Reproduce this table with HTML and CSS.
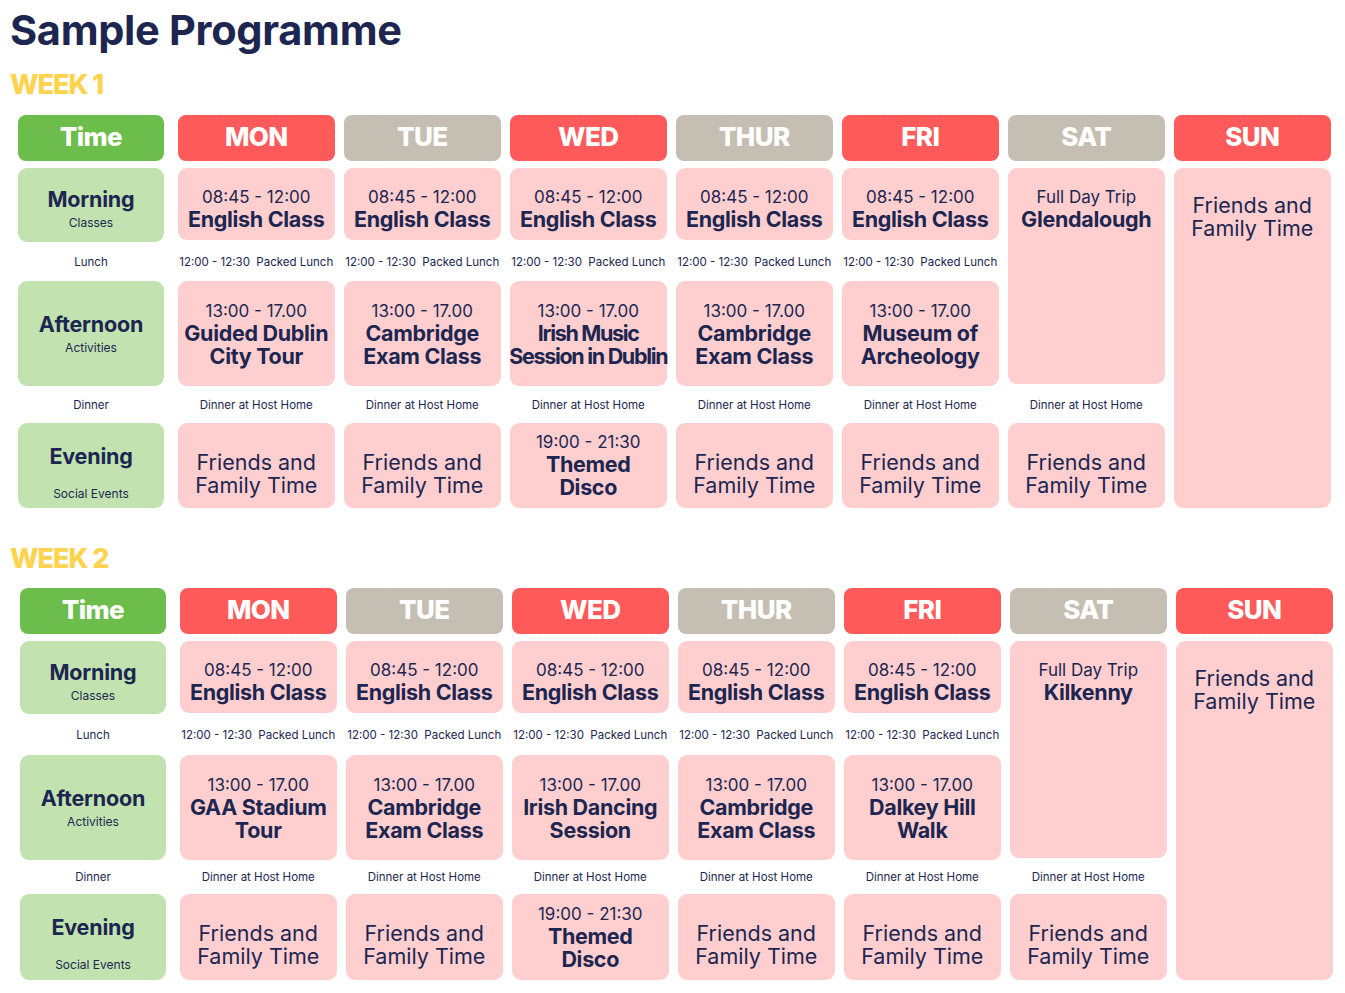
FILE: index.html
```html
<!DOCTYPE html>
<html lang="en">
<head>
<meta charset="utf-8">
<title>Sample Programme</title>
<link rel="stylesheet" href="styles.css">
</head>
<body>
<main class="page">
  <h1 class="title">Sample Programme</h1>

  <h2 class="week-label">WEEK 1</h2>
  <section class="week">
    <div class="head head-time c0">Time</div>
    <div class="head head-red c1">MON</div>
    <div class="head head-grey c2">TUE</div>
    <div class="head head-red c3">WED</div>
    <div class="head head-grey c4">THUR</div>
    <div class="head head-red c5">FRI</div>
    <div class="head head-grey c6">SAT</div>
    <div class="head head-red c7">SUN</div>

    <div class="slot slot-morning c0"><span class="slot-name">Morning</span><span class="slot-sub">Classes</span></div>
    <div class="cell r-morning c1"><span class="t">08:45 - 12:00</span><span class="b">English Class</span></div>
    <div class="cell r-morning c2"><span class="t">08:45 - 12:00</span><span class="b">English Class</span></div>
    <div class="cell r-morning c3"><span class="t">08:45 - 12:00</span><span class="b">English Class</span></div>
    <div class="cell r-morning c4"><span class="t">08:45 - 12:00</span><span class="b">English Class</span></div>
    <div class="cell r-morning c5"><span class="t">08:45 - 12:00</span><span class="b">English Class</span></div>
    <div class="cell trip c6"><span class="t">Full Day Trip</span><span class="b">Glendalough</span></div>
    <div class="cell sunday c7"><span class="r">Friends and<br>Family Time</span></div>

    <div class="note r-lunch c0">Lunch</div>
    <div class="note r-lunch c1">12:00 - 12:30&nbsp; Packed Lunch</div>
    <div class="note r-lunch c2">12:00 - 12:30&nbsp; Packed Lunch</div>
    <div class="note r-lunch c3">12:00 - 12:30&nbsp; Packed Lunch</div>
    <div class="note r-lunch c4">12:00 - 12:30&nbsp; Packed Lunch</div>
    <div class="note r-lunch c5">12:00 - 12:30&nbsp; Packed Lunch</div>

    <div class="slot slot-afternoon c0"><span class="slot-name">Afternoon</span><span class="slot-sub">Activities</span></div>
    <div class="cell r-afternoon c1"><span class="t">13:00 - 17.00</span><span class="b">Guided Dublin<br>City Tour</span></div>
    <div class="cell r-afternoon c2"><span class="t">13:00 - 17.00</span><span class="b">Cambridge<br>Exam Class</span></div>
    <div class="cell r-afternoon c3"><span class="t">13:00 - 17.00</span><span class="b tight">Irish Music<br>Session in Dublin</span></div>
    <div class="cell r-afternoon c4"><span class="t">13:00 - 17.00</span><span class="b">Cambridge<br>Exam Class</span></div>
    <div class="cell r-afternoon c5"><span class="t">13:00 - 17.00</span><span class="b">Museum of<br>Archeology</span></div>

    <div class="note r-dinner c0">Dinner</div>
    <div class="note r-dinner c1">Dinner at Host Home</div>
    <div class="note r-dinner c2">Dinner at Host Home</div>
    <div class="note r-dinner c3">Dinner at Host Home</div>
    <div class="note r-dinner c4">Dinner at Host Home</div>
    <div class="note r-dinner c5">Dinner at Host Home</div>
    <div class="note r-dinner c6">Dinner at Host Home</div>

    <div class="slot slot-evening c0"><span class="slot-name">Evening</span><span class="slot-sub">Social Events</span></div>
    <div class="cell r-evening c1"><span class="r">Friends and<br>Family Time</span></div>
    <div class="cell r-evening c2"><span class="r">Friends and<br>Family Time</span></div>
    <div class="cell r-evening c3 disco"><span class="t">19:00 - 21:30</span><span class="b">Themed<br>Disco</span></div>
    <div class="cell r-evening c4"><span class="r">Friends and<br>Family Time</span></div>
    <div class="cell r-evening c5"><span class="r">Friends and<br>Family Time</span></div>
    <div class="cell r-evening c6"><span class="r">Friends and<br>Family Time</span></div>
  </section>

  <h2 class="week-label week-label-2">WEEK 2</h2>
  <section class="week week-2">
    <div class="head head-time c0">Time</div>
    <div class="head head-red c1">MON</div>
    <div class="head head-grey c2">TUE</div>
    <div class="head head-red c3">WED</div>
    <div class="head head-grey c4">THUR</div>
    <div class="head head-red c5">FRI</div>
    <div class="head head-grey c6">SAT</div>
    <div class="head head-red c7">SUN</div>

    <div class="slot slot-morning c0"><span class="slot-name">Morning</span><span class="slot-sub">Classes</span></div>
    <div class="cell r-morning c1"><span class="t">08:45 - 12:00</span><span class="b">English Class</span></div>
    <div class="cell r-morning c2"><span class="t">08:45 - 12:00</span><span class="b">English Class</span></div>
    <div class="cell r-morning c3"><span class="t">08:45 - 12:00</span><span class="b">English Class</span></div>
    <div class="cell r-morning c4"><span class="t">08:45 - 12:00</span><span class="b">English Class</span></div>
    <div class="cell r-morning c5"><span class="t">08:45 - 12:00</span><span class="b">English Class</span></div>
    <div class="cell trip c6"><span class="t">Full Day Trip</span><span class="b">Kilkenny</span></div>
    <div class="cell sunday c7"><span class="r">Friends and<br>Family Time</span></div>

    <div class="note r-lunch c0">Lunch</div>
    <div class="note r-lunch c1">12:00 - 12:30&nbsp; Packed Lunch</div>
    <div class="note r-lunch c2">12:00 - 12:30&nbsp; Packed Lunch</div>
    <div class="note r-lunch c3">12:00 - 12:30&nbsp; Packed Lunch</div>
    <div class="note r-lunch c4">12:00 - 12:30&nbsp; Packed Lunch</div>
    <div class="note r-lunch c5">12:00 - 12:30&nbsp; Packed Lunch</div>

    <div class="slot slot-afternoon c0"><span class="slot-name">Afternoon</span><span class="slot-sub">Activities</span></div>
    <div class="cell r-afternoon c1"><span class="t">13:00 - 17.00</span><span class="b">GAA Stadium<br>Tour</span></div>
    <div class="cell r-afternoon c2"><span class="t">13:00 - 17.00</span><span class="b">Cambridge<br>Exam Class</span></div>
    <div class="cell r-afternoon c3"><span class="t">13:00 - 17.00</span><span class="b">Irish Dancing<br>Session</span></div>
    <div class="cell r-afternoon c4"><span class="t">13:00 - 17.00</span><span class="b">Cambridge<br>Exam Class</span></div>
    <div class="cell r-afternoon c5"><span class="t">13:00 - 17.00</span><span class="b">Dalkey Hill<br>Walk</span></div>

    <div class="note r-dinner c0">Dinner</div>
    <div class="note r-dinner c1">Dinner at Host Home</div>
    <div class="note r-dinner c2">Dinner at Host Home</div>
    <div class="note r-dinner c3">Dinner at Host Home</div>
    <div class="note r-dinner c4">Dinner at Host Home</div>
    <div class="note r-dinner c5">Dinner at Host Home</div>
    <div class="note r-dinner c6">Dinner at Host Home</div>

    <div class="slot slot-evening c0"><span class="slot-name">Evening</span><span class="slot-sub">Social Events</span></div>
    <div class="cell r-evening c1"><span class="r">Friends and<br>Family Time</span></div>
    <div class="cell r-evening c2"><span class="r">Friends and<br>Family Time</span></div>
    <div class="cell r-evening c3 disco"><span class="t">19:00 - 21:30</span><span class="b">Themed<br>Disco</span></div>
    <div class="cell r-evening c4"><span class="r">Friends and<br>Family Time</span></div>
    <div class="cell r-evening c5"><span class="r">Friends and<br>Family Time</span></div>
    <div class="cell r-evening c6"><span class="r">Friends and<br>Family Time</span></div>
  </section>
</main>
</body>
</html>
```

FILE: styles.css
```css
* { box-sizing: border-box; }

html, body {
  margin: 0;
  padding: 0;
  background: #ffffff;
}

body {
  font-family: Inter, "Noto Sans", "Liberation Sans", sans-serif;
  color: #1c2650;
}

.page {
  width: 1345px;
  padding: 4px 0 0 10px;
}

.title {
  margin: 0;
  font-size: 41.5px;
  line-height: 52px;
  font-weight: 700;
  letter-spacing: -0.3px;
  color: #1c2650;
}

.week-label {
  margin: 12px 0 0 0;
  height: 33px;
  font-size: 27px;
  line-height: 33px;
  font-weight: 800;
  letter-spacing: -1px;
  color: #ffd34d;
}

.week-label-2 {
  margin-top: 34px;
}

.week {
  display: grid;
  margin: 14px 0 0 8px;
  grid-template-columns: 150.5px repeat(7, 156.5px);
  grid-template-rows: 53px 74px 39px 105px 37px 85px;
  column-gap: 9.5px;
}

.week-2 {
  margin-left: 10px;
  margin-top: 13px;
  grid-template-rows: 53px 73px 41px 105px 34px 86px;
}

.c0 { grid-column: 1; width: 146px; }
.c1 { grid-column: 2; }
.c2 { grid-column: 3; }
.c3 { grid-column: 4; }
.c4 { grid-column: 5; }
.c5 { grid-column: 6; }
.c6 { grid-column: 7; }
.c7 { grid-column: 8; }

.head {
  grid-row: 1;
  height: 46px;
  border-radius: 8px;
  display: flex;
  align-items: center;
  justify-content: center;
  color: #ffffff;
  font-size: 26px;
  font-weight: 800;
  letter-spacing: -0.6px;
  padding-bottom: 3px;
  background-size: 7px 7px;
}

.head-time { background-color: #6dbd4c; }

.head-red {
  background-color: #ff5a59;
  background-image: radial-gradient(circle, rgba(255, 150, 150, 0.35) 0.7px, transparent 1px);
}

.head-grey {
  background-color: #c5bfb3;
  background-image: radial-gradient(circle, rgba(230, 160, 160, 0.45) 0.7px, transparent 1px);
}

.slot {
  background: #c2e3b0;
  border-radius: 9px;
  display: flex;
  flex-direction: column;
  align-items: center;
  color: #1c2650;
}

.slot-name {
  font-size: 21.5px;
  line-height: 26px;
  font-weight: 700;
  letter-spacing: -0.2px;
}

.slot-sub {
  font-size: 12px;
  line-height: 16px;
  margin-top: 3px;
}

.slot-morning {
  grid-row: 2;
  padding-top: 18px;
}

.slot-afternoon {
  grid-row: 4;
  padding-top: 30px;
}

.slot-evening {
  grid-row: 6;
  padding-top: 20px;
}

.slot-evening .slot-sub { margin-top: 17px; }

.cell {
  background: #ffcfcf;
  border-radius: 9px;
  display: flex;
  flex-direction: column;
  align-items: center;
  justify-content: center;
  text-align: center;
  color: #1c2650;
}

.r-morning { grid-row: 2; height: 72px; padding-top: 9px; }
.r-afternoon { grid-row: 4; padding-top: 2px; }
.r-evening { grid-row: 6; padding-top: 16px; }
.r-evening.disco { padding-top: 0; }

.trip {
  grid-row: 2 / 5;
  margin-bottom: 2px;
  justify-content: flex-start;
  padding-top: 19px;
}

.sunday {
  grid-row: 2 / 7;
  justify-content: flex-start;
  padding-top: 26px;
}

.t {
  font-size: 17px;
  line-height: 21px;
  font-weight: 400;
}

.b {
  font-size: 21.5px;
  line-height: 23px;
  font-weight: 700;
  letter-spacing: -0.3px;
}

.b.tight { letter-spacing: -1.3px; white-space: nowrap; }

.r {
  font-size: 21.5px;
  line-height: 23px;
  font-weight: 400;
}

.note {
  display: flex;
  align-items: center;
  justify-content: center;
  font-size: 11.5px;
  color: #1c2650;
  white-space: nowrap;
}

.r-lunch { grid-row: 3; }
.r-dinner { grid-row: 5; }
```
